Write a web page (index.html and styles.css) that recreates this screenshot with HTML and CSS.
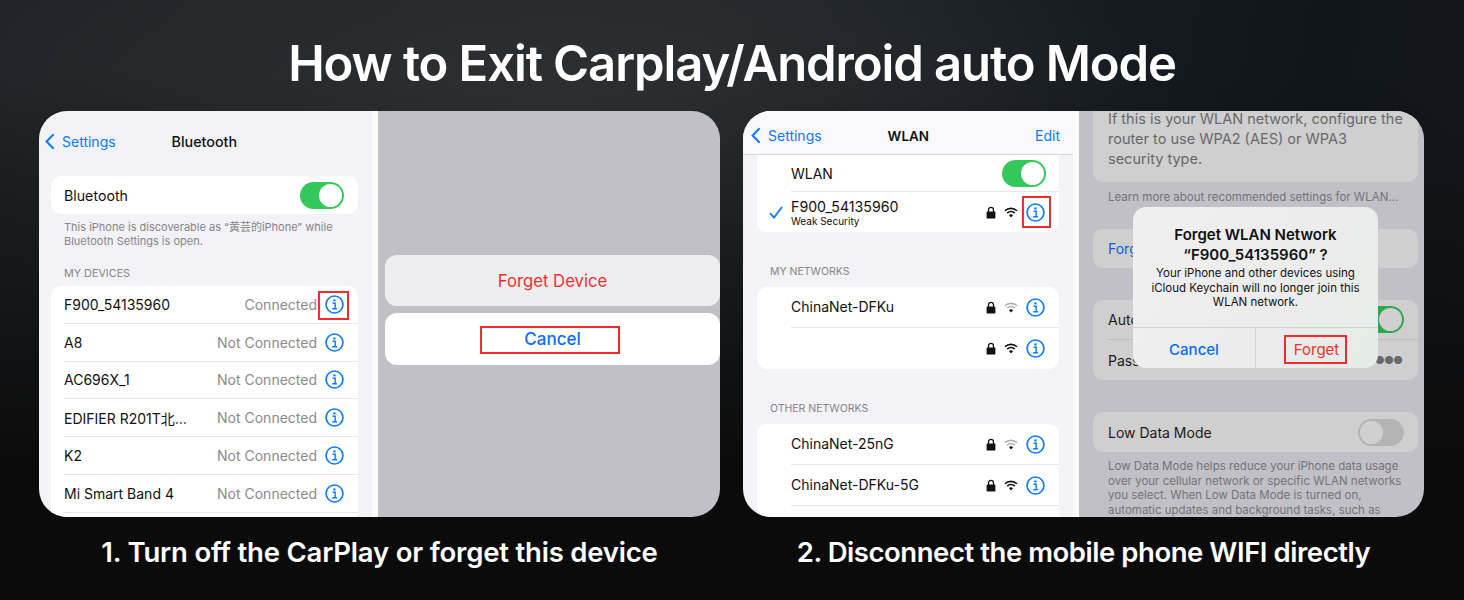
FILE: index.html
```html
<!DOCTYPE html>
<html lang="en">
<head>
    <meta charset="UTF-8">
    <meta name="viewport" content="width=device-width, initial-scale=1.0">
    <title>How to Exit Carplay/Android auto Mode</title>
    <link rel="stylesheet" href="styles.css">
</head>
<body>
    <svg class="sprites" width="0" height="0">
        <symbol id="info" viewBox="0 0 20 20">
            <circle cx="10" cy="10" r="8.9" fill="none" stroke="currentColor" stroke-width="1.7"/>
            <circle cx="9.9" cy="5.7" r="1.25" fill="currentColor"/>
            <path d="M7.9 8.7h2.8v5.6M7.6 14.5h5" fill="none" stroke="currentColor" stroke-width="1.5"/>
        </symbol>
        <symbol id="lock" viewBox="0 0 10 13">
            <path d="M2.5 6V3.8a2.5 2.5 0 0 1 5 0V6" fill="none" stroke="currentColor" stroke-width="1.3"/>
            <rect x="0.6" y="5.4" width="8.8" height="7.2" rx="1.2" fill="currentColor"/>
        </symbol>
        <symbol id="wifi" viewBox="0 0 14 11">
            <path d="M1 3.8a8.6 8.6 0 0 1 12 0" fill="none" stroke="currentColor" stroke-width="1.6"/>
            <path d="M3.2 6.1a5.4 5.4 0 0 1 7.6 0" fill="none" stroke="currentColor" stroke-width="1.6"/>
            <path d="M7 10.6 5 8.3a2.9 2.9 0 0 1 4 0z" fill="#111"/>
        </symbol>
        <symbol id="back" viewBox="0 0 10 17">
            <path d="M8.6 1.2 1.6 8.5l7 7.3" fill="none" stroke="currentColor" stroke-width="2"/>
        </symbol>
    </svg>

    <h1 class="headline">How to Exit Carplay/Android auto Mode</h1>

    <div class="panels">
        <section class="step">
            <div class="shot">
                <div class="list-side bt-side">
                    <div class="bt-nav">
                        <svg class="back"><use href="#back"/></svg>
                        <span class="nav-link">Settings</span>
                        <span class="bt-title">Bluetooth</span>
                    </div>
                    <div class="card bt-switch-card">
                        <span>Bluetooth</span>
                        <span class="toggle on"></span>
                    </div>
                    <p class="bt-note">This iPhone is discoverable as “黄芸的iPhone” while Bluetooth Settings is open.</p>
                    <div class="bt-label">MY DEVICES</div>
                    <div class="card bt-devices">
                        <div class="device">
                            <span class="device-name">F900_54135960</span>
                            <span class="device-state">Connected</span>
                            <span class="info-wrap"><svg class="info"><use href="#info"/></svg><i class="mark mark-bt"></i></span>
                        </div>
                        <div class="device">
                            <span class="device-name">A8</span>
                            <span class="device-state">Not Connected</span>
                            <span class="info-wrap"><svg class="info"><use href="#info"/></svg></span>
                        </div>
                        <div class="device">
                            <span class="device-name">AC696X_1</span>
                            <span class="device-state">Not Connected</span>
                            <span class="info-wrap"><svg class="info"><use href="#info"/></svg></span>
                        </div>
                        <div class="device">
                            <span class="device-name">EDIFIER R201T北…</span>
                            <span class="device-state">Not Connected</span>
                            <span class="info-wrap"><svg class="info"><use href="#info"/></svg></span>
                        </div>
                        <div class="device">
                            <span class="device-name">K2</span>
                            <span class="device-state">Not Connected</span>
                            <span class="info-wrap"><svg class="info"><use href="#info"/></svg></span>
                        </div>
                        <div class="device">
                            <span class="device-name">Mi Smart Band 4</span>
                            <span class="device-state">Not Connected</span>
                            <span class="info-wrap"><svg class="info"><use href="#info"/></svg></span>
                        </div>
                        <div class="device"></div>
                    </div>
                </div>
                <div class="dim-side sheet-side">
                    <div class="sheet-btn forget">Forget Device</div>
                    <div class="sheet-btn cancel"><span class="mark-cancel">Cancel</span></div>
                </div>
            </div>
            <h2 class="caption">1. Turn off the CarPlay or forget this device</h2>
        </section>

        <section class="step">
            <div class="shot">
                <div class="list-side wlan-side">
                    <div class="wlan-nav">
                        <svg class="back"><use href="#back"/></svg>
                        <span class="nav-link">Settings</span>
                        <span class="wlan-title">WLAN</span>
                        <span class="nav-link nav-edit">Edit</span>
                    </div>
                    <div class="card wlan-card">
                        <div class="net net-switch">
                            <span class="net-name">WLAN</span>
                            <span class="toggle on"></span>
                        </div>
                        <div class="net net-current">
                            <svg class="check" viewBox="0 0 14 13"><path d="M1 7.2 5 11.6 13 1" fill="none" stroke="currentColor" stroke-width="1.8"/></svg>
                            <span class="net-name">F900_54135960<small>Weak Security</small></span>
                            <svg class="lock"><use href="#lock"/></svg>
                            <svg class="wifi"><use href="#wifi"/></svg>
                            <span class="info-wrap"><svg class="info"><use href="#info"/></svg><i class="mark mark-wlan"></i></span>
                        </div>
                    </div>
                    <div class="wlan-label">MY NETWORKS</div>
                    <div class="card">
                        <div class="net">
                            <span class="net-name">ChinaNet-DFKu</span>
                            <svg class="lock"><use href="#lock"/></svg>
                            <svg class="wifi weak"><use href="#wifi"/></svg>
                            <svg class="info"><use href="#info"/></svg>
                        </div>
                        <div class="net">
                            <span class="net-name"></span>
                            <svg class="lock"><use href="#lock"/></svg>
                            <svg class="wifi"><use href="#wifi"/></svg>
                            <svg class="info"><use href="#info"/></svg>
                        </div>
                    </div>
                    <div class="wlan-label other">OTHER NETWORKS</div>
                    <div class="card">
                        <div class="net">
                            <span class="net-name">ChinaNet-25nG</span>
                            <svg class="lock"><use href="#lock"/></svg>
                            <svg class="wifi weak"><use href="#wifi"/></svg>
                            <svg class="info"><use href="#info"/></svg>
                        </div>
                        <div class="net">
                            <span class="net-name">ChinaNet-DFKu-5G</span>
                            <svg class="lock"><use href="#lock"/></svg>
                            <svg class="wifi"><use href="#wifi"/></svg>
                            <svg class="info"><use href="#info"/></svg>
                        </div>
                        <div class="net"></div>
                    </div>
                </div>
                <div class="dim-side detail-side">
                    <div class="dim-card security">If this is your WLAN network, configure the router to use WPA2 (AES) or WPA3 security type.</div>
                    <p class="learn">Learn more about recommended settings for WLAN...</p>
                    <div class="dim-card forget-row">Forg</div>
                    <div class="dim-card join">
                        <div class="join-row"><span>Auto</span><span class="toggle on small"></span></div>
                        <div class="join-row"><span>Pass</span><span class="dots">●●●</span></div>
                    </div>
                    <div class="dim-card low-data"><span>Low Data Mode</span><span class="toggle off"></span></div>
                    <p class="low-note">Low Data Mode helps reduce your iPhone data usage over your cellular network or specific WLAN networks you select. When Low Data Mode is turned on, automatic updates and background tasks, such as</p>
                    <div class="dialog">
                        <div class="dialog-body">
                            <div class="dialog-title">Forget WLAN Network<br>“F900_54135960” ?</div>
                            <div class="dialog-text">Your iPhone and other devices using iCloud Keychain will no longer join this WLAN network.</div>
                        </div>
                        <div class="dialog-actions">
                            <span class="dialog-cancel">Cancel</span>
                            <span class="dialog-forget"><b class="mark-forget">Forget</b></span>
                        </div>
                    </div>
                </div>
            </div>
            <h2 class="caption caption-tight">2. Disconnect the mobile phone WIFI directly</h2>
        </section>
    </div>
</body>
</html>
```

FILE: styles.css
```css
* {
    box-sizing: border-box;
}
body {
    margin: 0;
    width: 1464px;
    height: 600px;
    overflow: hidden;
    font-family: Inter, 'Noto Sans CJK SC', sans-serif;
    color: #111;
    background:
        linear-gradient(180deg, rgba(11,11,11,0) 12%, #0b0b0b 78%),
        radial-gradient(ellipse 640px 260px at 540px 120px, rgba(52,52,52,0.75), rgba(52,52,52,0)),
        linear-gradient(100deg, #1f2327 0%, #20262b 45%, #10151c 85%, #15181c 100%);
}
.sprites {
    position: absolute;
}
.headline {
    margin: 0;
    height: 111px;
    padding-top: 34px;
    text-align: center;
    font-size: 49px;
    letter-spacing: -1.1px;
    line-height: 60px;
    font-weight: 600;
    color: #fff;
}
.panels {
    display: flex;
    gap: 23px;
    padding-left: 39px;
}
.step {
    width: 681px;
}
.shot {
    display: flex;
    height: 406px;
    border-radius: 28px;
    overflow: hidden;
}
.caption {
    margin: 19px 0 0;
    text-align: center;
    font-size: 27.5px;
    letter-spacing: -0.2px;
    line-height: 32px;
    font-weight: 600;
    color: #fff;
}
.caption-tight {
    letter-spacing: -0.45px;
}

/* left half of each screenshot */
.list-side {
    flex: none;
    background: #f2f2f7;
    border-right: 6px solid #fbfbfc;
}
.bt-side {
    width: 339px;
    padding: 0 14px 0 12px;
}
.wlan-side {
    width: 336px;
}
.card {
    background: #fff;
    border-radius: 10px;
}
.nav-link {
    color: #0a7aff;
    font-size: 14px;
}
.back {
    width: 10px;
    height: 17px;
    color: #0a7aff;
}

.bt-nav {
    display: flex;
    align-items: center;
    height: 65px;
    margin-left: -6px;
    padding-bottom: 4px;
}
.bt-nav .nav-link {
    margin-left: 7px;
}
.bt-title {
    margin-left: 56px;
    font-size: 14.3px;
    font-weight: 500;
}
.bt-switch-card {
    display: flex;
    align-items: center;
    justify-content: space-between;
    height: 38px;
    padding: 0 14px 0 13px;
    font-size: 14.2px;
}
.toggle {
    position: relative;
    display: block;
    flex: none;
    width: 44px;
    height: 27px;
    border-radius: 14px;
}
.toggle.on {
    background: #34c759;
}
.toggle.off {
    width: 46px;
    background: #b4b4b6;
}
.toggle::after {
    content: "";
    position: absolute;
    top: 2px;
    width: 23px;
    height: 23px;
    border-radius: 50%;
    background: #fff;
}
.toggle.on::after {
    right: 2px;
}
.toggle.off::after {
    left: 2px;
    background: #d0d0d1;
}
.bt-note {
    margin: 6px 0 0;
    padding: 0 13px;
    font-size: 11px;
    line-height: 14px;
    color: #85858a;
}
.bt-label {
    margin-top: 19px;
    height: 19px;
    padding-left: 13px;
    font-size: 10.8px;
    line-height: 14px;
    color: #85858a;
}
.device {
    display: flex;
    align-items: center;
    height: 37.8px;
    margin-left: 13px;
    padding-right: 14px;
    font-size: 14px;
    border-bottom: 1px solid #e6e6e9;
}
.device-name {
    flex: 1;
}
.device-state {
    margin-right: 8px;
    color: #8a8a8e;
}
.info-wrap {
    position: relative;
    display: block;
    height: 19px;
}
.info {
    display: block;
    flex: none;
    width: 19px;
    height: 19px;
    color: #0a7aff;
}

/* red call-out boxes */
.mark {
    position: absolute;
    border: 2px solid #f02c2c;
}
.mark-bt {
    left: -7px;
    top: -4px;
    width: 31px;
    height: 29px;
}
.mark-wlan {
    left: -4px;
    top: -7px;
    width: 29px;
    height: 32px;
}
.mark-cancel {
    display: block;
    width: 140px;
    height: 28px;
    margin: 2px 5px 0 0;
    padding-left: 5px;
    line-height: 22px;
    text-align: center;
    border: 2px solid #f02c2c;
}
.mark-forget {
    display: block;
    width: 63px;
    height: 29px;
    padding-left: 2px;
    line-height: 25px;
    text-align: center;
    font-weight: 400;
    border: 2px solid #f02c2c;
}

/* action sheet */
.dim-side {
    position: relative;
    flex: 1;
    min-width: 0;
    background: #c1c0c6;
}
.sheet-side {
    padding: 144px 0 0 7px;
}
.sheet-btn {
    display: flex;
    align-items: center;
    justify-content: center;
    height: 51px;
    border-radius: 12px;
}
.forget {
    background: #eeeef0;
    color: #f5302b;
    font-size: 16.7px;
}
.cancel {
    height: 52px;
    margin-top: 7px;
    background: #fff;
    color: #0a6cff;
    font-size: 17px;
    font-weight: 500;
}

/* WLAN list */
.wlan-nav {
    position: relative;
    display: flex;
    align-items: center;
    height: 44px;
    padding: 6px 13px 0 8px;
    background: #f9f9fb;
    border-bottom: 1px solid #d9d9dd;
}
.wlan-nav .nav-link {
    margin-left: 7px;
}
.wlan-title {
    margin-left: 66px;
    font-size: 13.5px;
    font-weight: 600;
}
.wlan-nav .nav-edit {
    margin-left: auto;
}
.wlan-side .card {
    margin: 0 14px;
}
.wlan-card {
    border-radius: 0 0 10px 10px;
}
.net {
    display: flex;
    align-items: center;
    height: 41px;
    margin-left: 34px;
    padding-right: 14px;
    font-size: 14px;
    border-bottom: 1px solid #e6e6e9;
}
.net:last-child {
    border-bottom: none;
}
.net-switch {
    height: 37px;
    justify-content: space-between;
    padding-right: 13px;
}
.net-switch .net-name {
    padding-top: 2px;
}
.net-current {
    position: relative;
    height: 40px;
}
.net-current .net-name {
    padding-top: 2px;
    font-size: 14.2px;
}
.net-name {
    flex: 1;
    line-height: 16px;
}
.net-name small {
    display: block;
    font-size: 10px;
    line-height: 13px;
}
.check {
    position: absolute;
    left: -22px;
    top: 14px;
    width: 14px;
    height: 13px;
    color: #0a7aff;
}
.lock {
    flex: none;
    width: 10px;
    height: 13px;
    margin-right: 8px;
    color: #111;
}
.wifi {
    flex: none;
    width: 14px;
    height: 11px;
    margin-right: 8.5px;
    color: #111;
}
.wifi.weak {
    color: #b0b0b3;
}
.wlan-label {
    margin-top: 32px;
    height: 23px;
    padding: 1px 0 0 27px;
    font-size: 10.5px;
    line-height: 14px;
    color: #85858a;
}
.wlan-label.other {
    margin-top: 33px;
    height: 22px;
    padding-top: 0;
}

/* dimmed WLAN detail */
.detail-side {
    padding: 0 6px 0 14px;
    color: #1b1b1b;
}
.dim-card {
    background: #cfcfd0;
    border-radius: 10px;
    font-size: 14px;
}
.security {
    height: 73px;
    margin-top: -2px;
    padding: 0 14px 0 15px;
    font-size: 14.5px;
    line-height: 20px;
    color: #68686b;
    border-radius: 0 0 10px 10px;
}
.learn {
    margin: 8px 0 0;
    padding-left: 15px;
    height: 39px;
    font-size: 11.5px;
    line-height: 14px;
    color: #737376;
    white-space: nowrap;
}
.forget-row {
    height: 39px;
    padding-left: 15px;
    line-height: 39px;
    color: #0a5fd0;
}
.join {
    margin-top: 32px;
    padding-left: 15px;
}
.join-row {
    display: flex;
    align-items: center;
    justify-content: space-between;
    height: 40px;
    padding-right: 14px;
    border-bottom: 1px solid #bcbcbe;
}
.join-row:last-child {
    border-bottom: none;
}
.toggle.small {
    width: 46px;
    height: 27px;
    background: #2ea84e;
}
.toggle.small::after {
    background: #d0d0d1;
}
.dots {
    margin-right: 2px;
    font-size: 11px;
    letter-spacing: -1px;
    color: #68686b;
}
.low-data {
    display: flex;
    align-items: center;
    justify-content: space-between;
    height: 40px;
    margin-top: 32px;
    padding: 0 14px 0 15px;
}
.low-note {
    margin: 7px 0 0;
    padding-left: 15px;
    font-size: 11.5px;
    line-height: 14.6px;
    color: #737376;
}
.dialog {
    position: absolute;
    left: 54px;
    top: 96px;
    width: 245px;
    height: 161px;
    border-radius: 13px;
    background: linear-gradient(120deg, #f0f0f0 0%, #ececec 60%, #e4ece6 100%);
}
.dialog-body {
    height: 121px;
    padding: 18px 10px 0;
    text-align: center;
    border-bottom: 1px solid #d2d2d4;
}
.dialog-title {
    font-size: 15px;
    line-height: 20px;
    font-weight: 600;
    color: #111;
}
.dialog-text {
    margin-top: 1px;
    font-size: 11.5px;
    line-height: 14.5px;
    color: #111;
}
.dialog-actions {
    display: flex;
    height: 40px;
    font-size: 15px;
}
.dialog-cancel {
    flex: none;
    width: 123px;
    padding-top: 2px;
    text-align: center;
    line-height: 40px;
    font-weight: 500;
    color: #0a6cff;
    border-right: 1px solid #d2d2d4;
}
.dialog-forget {
    flex: 1;
    padding: 7px 0 0 28px;
    color: #f5302b;
}
```
